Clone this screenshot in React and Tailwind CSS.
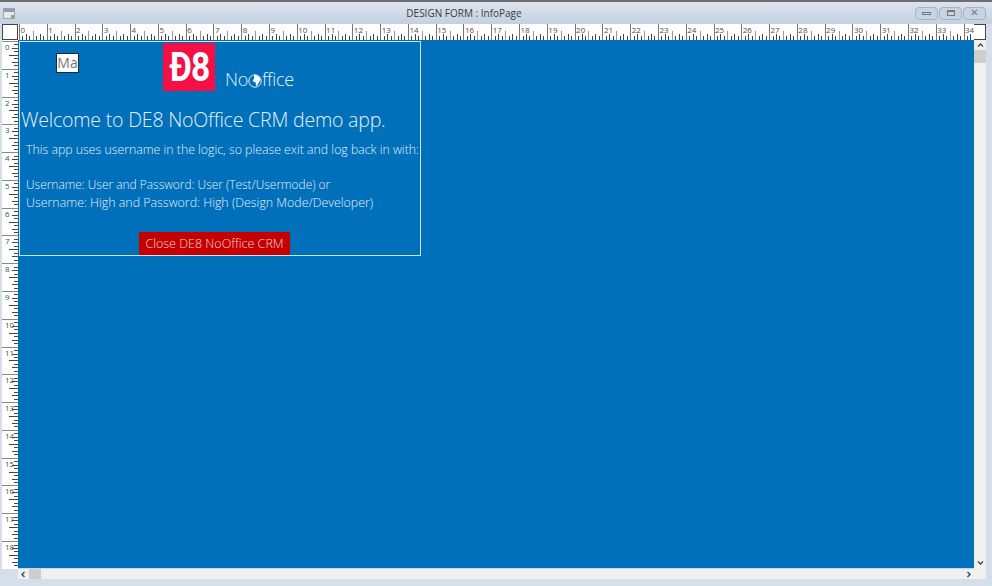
const UNIT = 27.78;

function HRuler() {
  const ticks = [];
  const labels = [];
  for (let i = 0; i < 35; i++) {
    const x0 = 1 + i * UNIT;
    labels.push(<text key={i} x={x0 + 1.5} y={9} fontSize="8" fill="#5a4c30">{i}</text>);
    for (let t = 0; t < 8; t++) {
      const x = Math.round(x0 + (t * UNIT) / 8) + 0.5;
      const h = t === 0 ? 16 : t === 4 ? 9 : t % 2 === 0 ? 6 : 4;
      ticks.push(<line key={`${i}-${t}`} x1={x} x2={x} y1={16 - h} y2={16} stroke={t === 0 ? '#777' : t === 4 ? '#999' : '#444'} />);
    }
  }
  return (
    <svg width="956" height="16" className="block bg-white">
      {ticks}
      {labels}
    </svg>
  );
}

function VRuler() {
  const ticks = [];
  const labels = [];
  for (let i = 0; i < 19; i++) {
    const y0 = 1 + i * UNIT;
    labels.push(<text key={i} x={3} y={y0 + 9} fontSize="8" fill="#5a4c30">{i}</text>);
    for (let t = 0; t < 8; t++) {
      const y = Math.round(y0 + (t * UNIT) / 8) + 0.5;
      const w = t === 0 ? 16 : t === 4 ? 9 : t % 2 === 0 ? 6 : 4;
      ticks.push(<line key={`${i}-${t}`} x1={16 - w} x2={16} y1={y} y2={y} stroke={t === 0 ? '#888' : '#444'} />);
    }
  }
  return (
    <svg width="16" height="529" className="block bg-white">
      {ticks}
      {labels}
    </svg>
  );
}

function WinButton({ children }) {
  return (
    <div className="w-[23px] h-[13px] rounded-sm border border-[#a6b2c4] bg-[#c9d4e3] flex items-center justify-center">
      {children}
    </div>
  );
}

function Chevron({ d }) {
  return (
    <svg width="7" height="7" viewBox="0 0 7 7" className="block">
      <path d={d} fill="none" stroke="#444" strokeWidth="1.4" />
    </svg>
  );
}

function Logo() {
  return (
    <div className="w-[52px] h-[48px] shrink-0 bg-[#f50f45] flex items-center justify-center">
      <span className="text-white font-bold text-[41px] tracking-[-1px] leading-none font-['Roboto',sans-serif] [transform:scaleX(0.82)]">Đ8</span>
    </div>
  );
}

function Globe() {
  return (
    <svg width="14" height="14" viewBox="0 0 14 14" className="inline-block align-[-2px]">
      <circle cx="7" cy="7" r="6.2" fill="none" stroke="#e4eff7" strokeWidth="1" />
      <path d="M6 1c3 0 6 1.500 6.500 4.500L11 8.500 8.500 12.500 7.500 8.500 4.500 7 6 4.500z" fill="#ffffff" />
    </svg>
  );
}

export default function App() {
  return (
    <div className="w-[992px] h-[586px] flex flex-col overflow-hidden bg-[#d5dfeb] text-[#333] font-['Open_Sans',sans-serif]">
      <div className="h-[2px] bg-[#6e6e6e] shrink-0" />
      {/* title bar */}
      <div className="h-[22px] shrink-0 flex items-center pl-[3px] pr-[6px] bg-gradient-to-b from-[#dde4ee] to-[#c3d0e0]">
        <div className="w-[12px] h-[11px] border border-[#9aa5b3] bg-[#e6e9ee] flex flex-col mt-[1px]">
          <div className="h-[3px] bg-[#8d9cb1]" />
          <div className="flex-1 flex justify-end items-end">
            <div className="w-[3px] h-[3px] bg-[#8bb04a]" />
          </div>
        </div>
        <div className="flex-1 text-center text-[10px] text-[#3a3a3a] font-['Open_Sans',sans-serif] pr-[2px]">DESIGN FORM : InfoPage</div>
        <div className="flex items-center gap-[1px]">
          <WinButton><div className="w-[9px] h-[3px] border border-[#777]" /></WinButton>
          <WinButton><div className="w-[8px] h-[6px] border border-[#777] border-t-2" /></WinButton>
          <WinButton><span className="text-[10px] leading-none text-[#777] font-['DejaVu_Sans',sans-serif]">✕</span></WinButton>
        </div>
      </div>
      {/* ruler row */}
      <div className="h-[16px] shrink-0 flex pl-[2px]">
        <div className="w-[16px] h-[16px] bg-white border border-[#444]" />
        <HRuler />
        <div className="w-[12px] h-[16px] bg-white border border-[#444] border-l-0" />
      </div>
      <div className="flex-1 flex pl-[2px] min-h-0">
        <VRuler />
        <div className="w-[956px] flex flex-col">
          <div className="flex-1 bg-[#0070ba] pt-px pl-px">
            {/* form being designed */}
            <div className="w-[402px] h-[215px] border border-[#cfe2f0] flex flex-col text-[#e4eff7] font-light">
              <div className="flex h-[60px]">
                <div className="w-[23px] h-[20px] mt-[11px] ml-[36px] bg-white border border-[#1a2a3a] text-[#777] font-normal text-[14px] leading-[18px] text-center overflow-hidden">Ma</div>
                <div className="ml-[84px] mt-px"><Logo /></div>
                <div className="ml-[10px] mt-[24px] text-[18px] tracking-[-0.3px] whitespace-nowrap">No<Globe />ffice</div>
              </div>
              <div className="pl-[1px] mt-[5px] text-[19.55px] leading-[30px] tracking-[-0.2px] whitespace-nowrap">Welcome to DE8 NoOffice CRM demo app.</div>
              <div className="pl-[6px] mt-[6px] text-[12.3px] leading-[17px] whitespace-nowrap">This app uses username in the logic, so please exit and log back in with:</div>
              <div className="pl-[6px] mt-[18px] leading-[17.5px] whitespace-nowrap">
                <div className="text-[11.95px]">Username: User and Password: User (Test/Usermode) or</div>
                <div className="text-[12.4px]">Username: High and Password: High (Design Mode/Developer)</div>
              </div>
              <div className="mt-[21px] ml-[119px] w-[151px] h-[23px] bg-[#c60000] text-[12.5px] leading-[23px] text-center text-[#f1d6d6] whitespace-nowrap">Close DE8 NoOffice CRM</div>
            </div>
          </div>
          {/* bottom scrollbar */}
          <div className="h-[11px] shrink-0 bg-[#f0f0f0] border-t border-[#c7d7e6] flex items-center justify-between">
            <div className="flex items-center">
              <div className="w-[11px] flex justify-center"><Chevron d="M4.500 1 2 3.500 4.500 6" /></div>
              <div className="w-[12px] h-[10px] bg-[#cdcdcd]" />
            </div>
            <div className="w-[11px] flex justify-center"><Chevron d="M2.500 1 5 3.500 2.500 6" /></div>
          </div>
        </div>
        {/* right scrollbar */}
        <div className="w-[12px] bg-[#f0f0f0] flex flex-col items-center justify-between">
          <div className="flex flex-col items-center w-full">
            <div className="h-[10px] flex items-center"><Chevron d="M1 4.500 3.500 2 6 4.500" /></div>
            <div className="w-full h-[13px] bg-[#cdcdcd]" />
          </div>
          <div className="h-[22px] flex items-start pt-[2px]"><Chevron d="M1 2.500 3.500 5 6 2.500" /></div>
        </div>
      </div>
      <div className="h-[7px] shrink-0 bg-[#d5dfeb]" />
    </div>
  );
}
